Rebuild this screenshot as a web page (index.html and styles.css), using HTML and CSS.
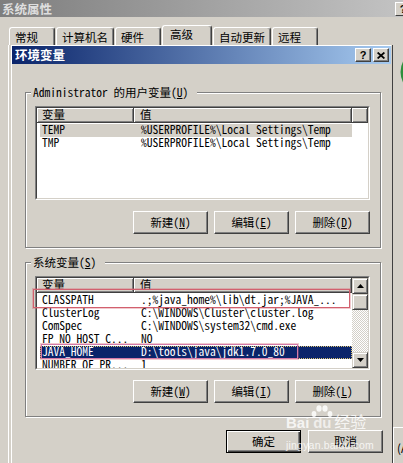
FILE: index.html
```html
<!DOCTYPE html>
<html lang="zh-CN">
<head>
<meta charset="utf-8">
<title>环境变量</title>
<link rel="stylesheet" href="styles.css">
</head>
<body>
<div class="outer-title">
  <span class="ot-text">系统属性</span>
  <span class="ot-help">?</span>
</div>
<div class="tabs">
  <div class="tab">常规</div>
  <div class="tab">计算机名</div>
  <div class="tab">硬件</div>
  <div class="tab active">高级</div>
  <div class="tab">自动更新</div>
  <div class="tab">远程</div>
</div>
<div class="stage">
  <div class="lstrip"></div>
  <div class="dialog">
    <div class="titlebar">
      <span class="title">环境变量</span>
      <div class="tbtns">
        <span class="tbtn help">?</span>
        <span class="tbtn"><svg width="8" height="7" viewBox="0 0 8 7"><path d="M0.6 0.5 L7.4 6.5 M7.4 0.5 L0.6 6.5" stroke="#000" stroke-width="1.7"/></svg></span>
      </div>
    </div>
    <div class="dbody">
      <fieldset class="group">
        <legend>Administrator 的用户变量(<u>U</u>)</legend>
        <div class="list">
          <div class="lin">
            <div class="lmain">
              <div class="lhead">
                <div class="hc c1">变量</div>
                <div class="hc c2">值</div>
                <div class="hc hfill"></div>
              </div>
              <div class="rows">
                <div class="row inactive"><span class="k">TEMP</span><span class="v">%USERPROFILE%\Local Settings\Temp</span></div>
                <div class="row"><span class="k">TMP</span><span class="v">%USERPROFILE%\Local Settings\Temp</span></div>
              </div>
            </div>
          </div>
        </div>
        <div class="btnrow">
          <span class="btn">新建(<u>N</u>)</span>
          <span class="btn">编辑(<u>E</u>)</span>
          <span class="btn">删除(<u>D</u>)</span>
        </div>
      </fieldset>
      <fieldset class="group">
        <legend>系统变量(<u>S</u>)</legend>
        <div class="list">
          <div class="lin">
            <div class="lmain">
              <div class="lhead">
                <div class="hc c1">变量</div>
                <div class="hc c2">值</div>
              </div>
              <div class="rows">
                <div class="row"><span class="k">CLASSPATH</span><span class="v">.;%java_home%\lib\dt.jar;%JAVA_...</span></div>
                <div class="row"><span class="k">ClusterLog</span><span class="v">C:\WINDOWS\Cluster\cluster.log</span></div>
                <div class="row"><span class="k">ComSpec</span><span class="v">C:\WINDOWS\system32\cmd.exe</span></div>
                <div class="row"><span class="k">FP_NO_HOST_C...</span><span class="v">NO</span></div>
                <div class="row sel"><span class="k">JAVA_HOME</span><span class="v">D:\tools\java\jdk1.7.0_80</span></div>
                <div class="row"><span class="k">NUMBER OF PR...</span><span class="v">1</span></div>
              </div>
            </div>
            <div class="sbar">
              <div class="sbtn"><svg width="7" height="4" viewBox="0 0 7 4"><path d="M3.5 0 L7 4 L0 4 Z" fill="#000"/></svg></div>
              <div class="sbtn thumb"></div>
              <div class="strack"></div>
              <div class="sbtn"><svg width="7" height="4" viewBox="0 0 7 4"><path d="M0 0 L7 0 L3.5 4 Z" fill="#000"/></svg></div>
            </div>
          </div>
        </div>
        <div class="btnrow low">
          <span class="btn">新建(<u>W</u>)</span>
          <span class="btn">编辑(<u>I</u>)</span>
          <span class="btn">删除(<u>L</u>)</span>
        </div>
      </fieldset>
      <div class="okrow">
        <span class="btn default">确定</span>
        <span class="btn">取消</span>
      </div>
    </div>
  </div>
  <div class="rstrip">
    <svg class="globe" width="11" height="44" viewBox="0 0 11 44"><circle cx="26" cy="24" r="21" fill="#e9efe6" stroke="#2e8f3c" stroke-width="3"/><circle cx="26" cy="24" r="17" fill="none" stroke="#8cc894" stroke-width="1.5"/></svg>
    <div class="rbtn">(A</div>
  </div>
</div>
<div class="anno anno-cp"></div>
<div class="anno anno-jh"></div>
<div class="wm">
  <div class="wm-top">
    <span class="wm-bai">Bai</span>
    <span class="wm-paw">
      <svg width="22" height="14" viewBox="0 0 22 14"><ellipse cx="3" cy="9" rx="2.4" ry="3" fill="#fff"/><ellipse cx="8" cy="3.5" rx="2.6" ry="3.2" fill="#fff"/><ellipse cx="14" cy="3.5" rx="2.6" ry="3.2" fill="#fff"/><ellipse cx="19" cy="9" rx="2.4" ry="3" fill="#fff"/></svg>
      <span class="wm-du">du</span>
    </span>
    <span class="wm-jy">经验</span>
  </div>
  <div class="wm-url">jingyan.baidu.com</div>
</div>
</body>
</html>
```
FILE: styles.css
```css
* { box-sizing: border-box; }
html, body { margin: 0; padding: 0; }
body {
  width: 403px;
  height: 463px;
  overflow: hidden;
  position: relative;
  background: #d4d0c8;
  color: #000;
  font-family: "Noto Sans Mono CJK SC", "Noto Sans CJK SC", "Liberation Mono", monospace;
  font-size: 11.5px;
  line-height: 13px;
}
u { text-decoration: underline; text-underline-offset: 1px; }

/* background window title */
.outer-title {
  height: 17px;
  display: flex;
  align-items: center;
  justify-content: space-between;
  padding-left: 2px;
  background: linear-gradient(to right, #7e7e7e, #c3c3c3);
  overflow: hidden;
}
.ot-text {
  font-family: "Noto Sans CJK SC", sans-serif;
  font-weight: 700;
  font-size: 12.5px;
  line-height: 14px;
  color: #dedede;
}
.ot-help {
  flex: none;
  width: 16px;
  height: 14px;
  margin-right: -8px;
  background: #d4d0c8;
  border: 1px solid;
  border-color: #fff #404040 #404040 #fff;
  font: bold 11px/12px "Liberation Sans", sans-serif;
  text-align: center;
}

/* tabs */
.tabs {
  display: flex;
  align-items: flex-end;
  height: 20px;
  margin-top: 8px;
  padding-left: 9px;
}
.tab {
  height: 18px;
  min-width: 46px;
  margin-right: 1px;
  padding: 3px 5px 0 5px;
  border: 1px solid #fff;
  border-bottom: 0;
  border-right-color: #404040;
  border-radius: 3px 3px 0 0;
  box-shadow: inset -1px 0 0 #808080;
  white-space: nowrap;
  font-family: "Noto Sans CJK SC", sans-serif;
  line-height: 12px;
}
.tab.active {
  height: 20px;
  width: 50px;
  padding: 2px 5px 0 7px;
}

/* main area */
.stage {
  display: flex;
  height: 418px;
}
.lstrip {
  flex: none;
  width: 9px;
  margin-right: 2px;
  border-right: 1px solid #fff;
}
.dialog {
  flex: none;
  width: 381px;
  display: flex;
  flex-direction: column;
  border-left: 1px solid #fff;
  border-top: 1px solid #fff;
  border-right: 1px solid #d4d0c8;
}
.titlebar {
  height: 18px;
  flex: none;
  display: flex;
  align-items: center;
  justify-content: space-between;
  padding: 0 2px 0 3px;
  background: linear-gradient(to right, #0a246a, #a6caf0);
}
.title {
  color: #fff;
  font-family: "Noto Sans CJK SC", sans-serif;
  font-weight: 700;
  font-size: 12.5px;
  line-height: 14px;
}
.tbtns { display: flex; gap: 2px; }
.tbtn {
  width: 16px;
  height: 14px;
  display: flex;
  align-items: center;
  justify-content: center;
  background: #d4d0c8;
  border: 1px solid;
  border-color: #fff #404040 #404040 #fff;
  box-shadow: inset -1px -1px 0 #808080;
}
.tbtn.help { font: bold 11px/1 "Liberation Sans", sans-serif; }

.dbody {
  display: flex;
  flex-direction: column;
  padding-left: 13px;
}

/* group boxes */
.group {
  width: 356px;
  min-width: 0;
  margin: 21px 0 0 0;
  padding: 6px 10px 13px 9px;
  border: 1px solid #808080;
  box-shadow: inset 1px 1px 0 #fff, 1px 1px 0 #fff;
}
.group + .group { margin-top: 7px; }
.group legend {
  height: 15px;
  line-height: 15px;
  margin-left: -4px;
  padding: 0 9px 0 2px;
  background: #d4d0c8;
}

/* list views */
.list {
  height: 94px;
  border: 1px solid;
  border-color: #808080 #fff #fff #808080;
}
.lin {
  height: 100%;
  display: flex;
  background: #fff;
  border: 1px solid;
  border-color: #404040 #d4d0c8 #d4d0c8 #404040;
  overflow: hidden;
}
.lmain {
  flex: 1;
  min-width: 0;
  overflow: hidden;
}
.lhead { display: flex; height: 15px; }
.hc {
  flex: none;
  height: 15px;
  padding-left: 5px;
  line-height: 13px;
  background: #d4d0c8;
  border-right: 1px solid #404040;
  border-bottom: 1px solid #404040;
  box-shadow: inset 1px 1px 0 #fff, inset -1px -1px 0 #808080;
}
.c1 { width: 97px; }
.c2 { width: 218px; padding-left: 6px; }
.hfill { flex: 1; }

.rows { padding-top: 1px; }
.row {
  display: flex;
  align-items: flex-start;
  width: 312px;
  height: 13px;
  margin-left: 3px;
  padding-left: 2px;
  white-space: nowrap;
  line-height: 11px;
}
.row .k { flex: none; width: 99px; }
.row.inactive { background: #d4d0c8; }
.row.sel {
  background: #0a246a;
  color: #fff;
  outline: 1px dotted #d8c070;
  outline-offset: -1px;
}

/* scrollbar */
.sbar {
  flex: none;
  width: 16px;
  display: flex;
  flex-direction: column;
}
.sbtn {
  flex: none;
  height: 16px;
  display: flex;
  align-items: center;
  justify-content: center;
  background: #d4d0c8;
  border: 1px solid;
  border-color: #d4d0c8 #404040 #404040 #d4d0c8;
  box-shadow: inset 1px 1px 0 #fff, inset -1px -1px 0 #808080;
}
.strack {
  flex: 1;
  background-image: conic-gradient(#fff 0 25%, #d4d0c8 0 50%, #fff 0 75%, #d4d0c8 0);
  background-size: 2px 2px;
}

/* buttons */
.btnrow {
  display: flex;
  justify-content: flex-end;
  gap: 6px;
  margin-top: 11px;
}
.btnrow.low { margin-top: 10px; }
.btn {
  width: 75px;
  height: 23px;
  display: flex;
  align-items: center;
  justify-content: center;
  background: #d4d0c8;
  border: 1px solid;
  border-color: #fff #404040 #404040 #fff;
  box-shadow: inset -1px -1px 0 #808080;
}
.btn.default {
  border-color: #000;
  box-shadow: inset 1px 1px 0 #fff, inset -1px -1px 0 #404040, inset -2px -2px 0 #808080;
}
.okrow {
  display: flex;
  justify-content: flex-end;
  gap: 7px;
  margin-top: 13px;
  padding-right: 8px;
}

/* background window right edge */
.rstrip {
  flex: 1;
  min-width: 0;
  display: flex;
  flex-direction: column;
  border-left: 1px solid #404040;
  overflow: hidden;
}
.globe { flex: none; margin: 3px 0 0 4px; }
.rbtn {
  margin-top: auto;
  height: 36px;
  margin-left: 0;
  padding: 14px 0 0 3px;
  border-top: 1px solid #fff;
  border-left: 1px solid #fff;
  white-space: nowrap;
  font-family: "Noto Sans CJK SC", sans-serif;
}

/* red annotation boxes drawn over the screenshot */
.anno {
  position: absolute;
  border: 1px solid #d2606e;
  box-shadow: 0 0 0 1px rgba(214, 100, 115, 0.35);
}
.anno-cp { left: 33px; top: 289px; width: 317px; height: 19px; }
.anno-jh { left: 41px; top: 344px; width: 257px; height: 15px; border-color: #d47aa8; }

/* watermark */
.wm {
  position: absolute;
  left: 286px;
  top: 405px;
  color: rgba(255, 255, 255, 0.8);
  font-family: "Liberation Sans", Arial, sans-serif;
}
.wm-top { display: flex; align-items: flex-end; }
.wm-bai { font-weight: 700; font-size: 15px; line-height: 15px; }
.wm-paw {
  display: flex;
  flex-direction: column;
  align-items: center;
  margin-left: 2px;
  opacity: 0.85;
}
.wm-du { font-weight: 700; font-size: 15px; line-height: 15px; margin-top: -4px; }
.wm-jy {
  font-family: "Noto Sans CJK SC", sans-serif;
  font-size: 16px;
  line-height: 17px;
  margin-left: 1px;
}
.wm-url { font-size: 10.5px; line-height: 12px; margin-top: 9px; letter-spacing: 0.2px; }
```
